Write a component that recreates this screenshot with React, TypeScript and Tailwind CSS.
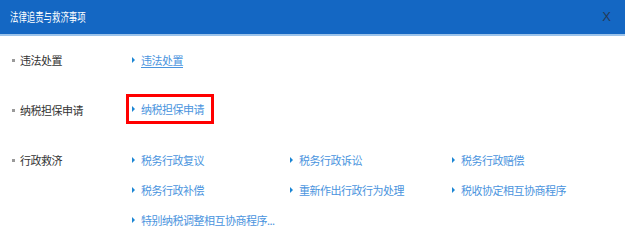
import React from "react";

type Link = { text: string; active?: boolean; underline?: boolean };
type Group = { label: string; links: Link[] };

const groups: Group[] = [
  { label: "违法处置", links: [{ text: "违法处置", underline: true }] },
  { label: "纳税担保申请", links: [{ text: "纳税担保申请", active: true }] },
  {
    label: "行政救济",
    links: [
      { text: "税务行政复议" },
      { text: "税务行政诉讼" },
      { text: "税务行政赔偿" },
      { text: "税务行政补偿" },
      { text: "重新作出行政行为处理" },
      { text: "税收协定相互协商程序" },
      { text: "特别纳税调整相互协商程序..." },
    ],
  },
];

const font = "font-['Microsoft_YaHei','Noto_Sans_CJK_SC',sans-serif]";

function LinkItem({ link }: { link: Link }) {
  const inner = (
    <span className="flex h-[24px] items-center">
      <span className="mr-[6px] h-0 w-0 border-y-[3px] border-l-[3px] border-y-transparent border-l-[#1c86d4]" />
      <span
        className={`text-[11px] tracking-[-0.5px] text-[#4a94de] ${link.underline ? "underline underline-offset-2" : ""}`}
      >
        {link.text}
      </span>
    </span>
  );
  if (link.active) {
    return (
      <div className="flex h-[30px] items-center">
        <div className="-mt-[2px] -ml-[6px] flex h-[30px] items-center border-[3px] border-[#ff0000] pl-[3px] pr-[7px]">
          {inner}
        </div>
      </div>
    );
  }
  return <div className="flex h-[30px] items-center">{inner}</div>;
}

export default function App() {
  return (
    <div className={`h-[244px] w-[625px] overflow-hidden bg-white ${font}`}>
      <div className="flex h-[34px] items-center justify-between bg-[#1467c3] pl-[10px] pr-[14px]">
        <span className="origin-left scale-x-[0.7] whitespace-nowrap text-[12px] text-white">
          法律追责与救济事项
        </span>
        <span className="font-['Liberation_Sans',sans-serif] text-[13px] text-[#243a58]">X</span>
      </div>
      <div className="h-[2px] bg-[#9cc3ea]" />
      <div className="flex flex-col gap-[20px] pt-[9px]">
        {groups.map((g) => (
          <div key={g.label} className="flex">
            <div className="flex h-[30px] w-[132px] shrink-0 items-center pl-[12px]">
              <span className="mr-[5px] h-[3px] w-[3px] bg-[#9a9a9a]" />
              <span className="text-[11px] tracking-[-0.5px] text-[#333]">{g.label}</span>
            </div>
            <div className="grid flex-1 grid-cols-[158px_162px_1fr]">
              {g.links.map((l) => (
                <LinkItem key={l.text} link={l} />
              ))}
            </div>
          </div>
        ))}
      </div>
    </div>
  );
}
